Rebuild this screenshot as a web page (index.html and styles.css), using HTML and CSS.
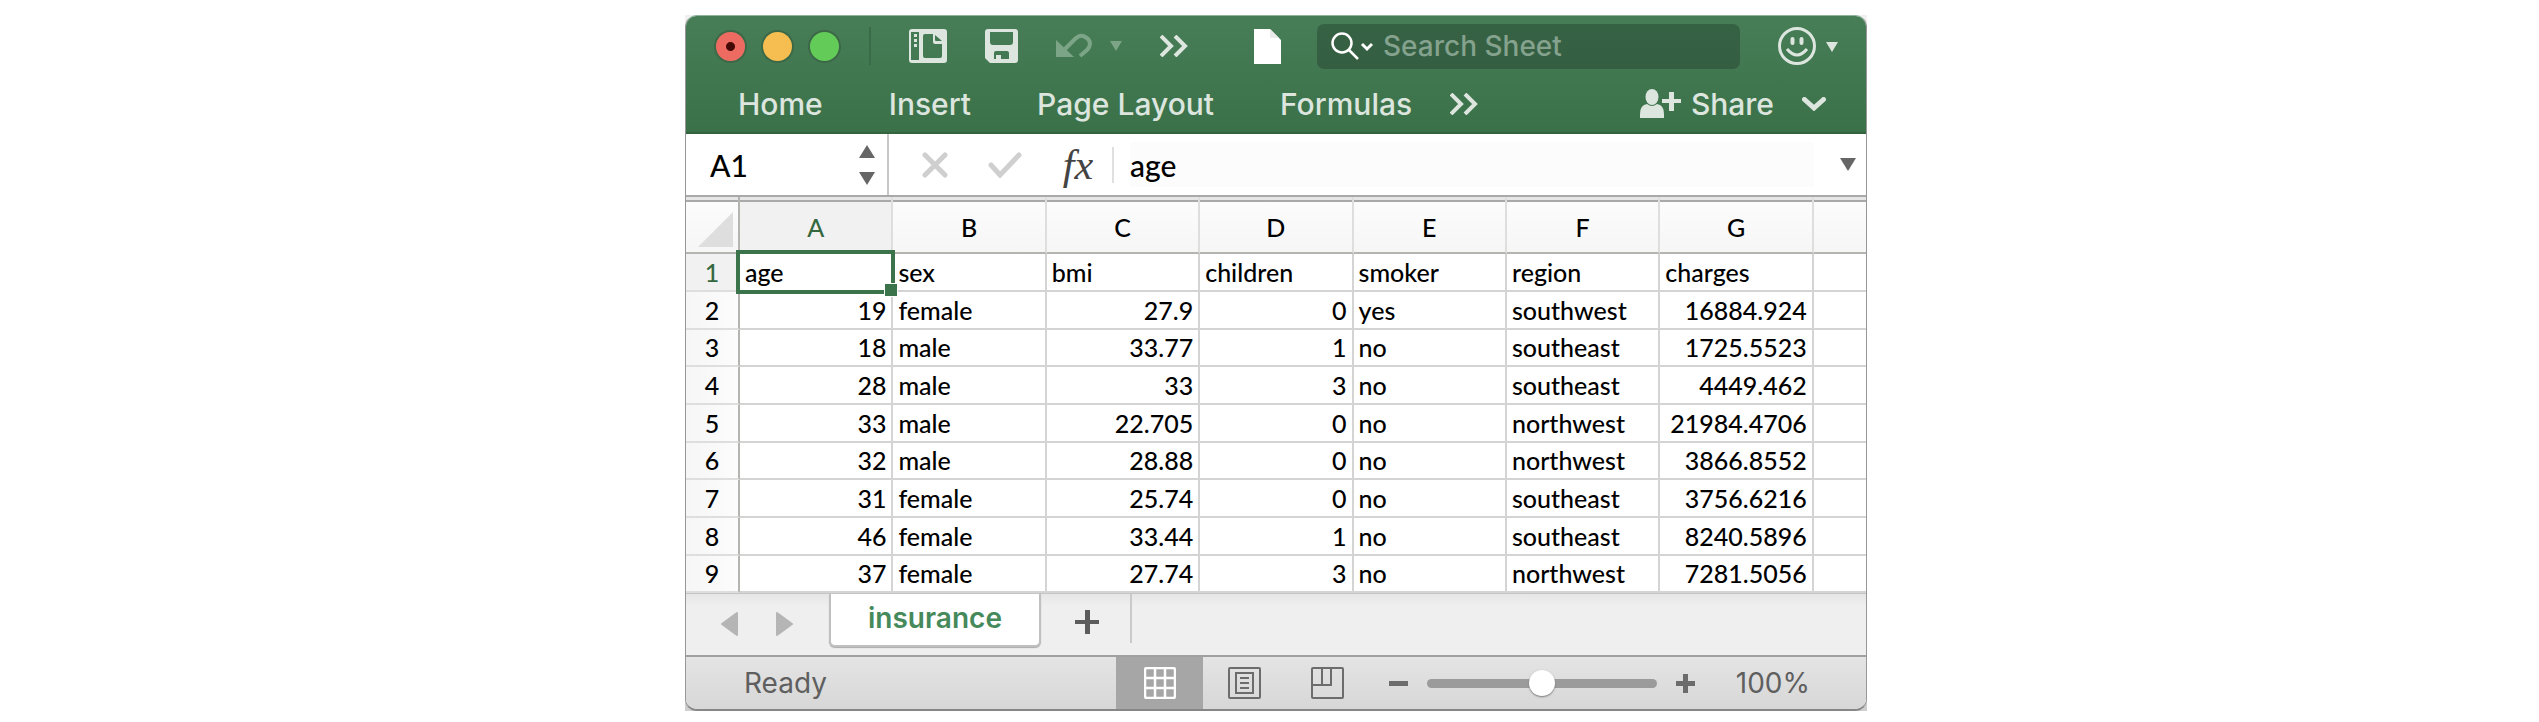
FILE: index.html
```html
<!DOCTYPE html>
<html lang="en">
<head>
<meta charset="utf-8">
<title>insurance</title>
<link rel="stylesheet" href="styles.css">
</head>
<body>
<main class="desktop">
<div class="frame">
<div class="window">
  <header class="ribbon">
    <div class="titlebar">
      <div class="lights">
        <button class="light light-close" aria-label="Close"></button>
        <button class="light light-min" aria-label="Minimize"></button>
        <button class="light light-max" aria-label="Zoom"></button>
      </div>
      <div class="quick">
        <button class="icon-btn" aria-label="Templates">
          <svg width="38" height="34" viewBox="0 0 38 34"><path fill="#dce5de" fill-rule="evenodd" d="M3 0H35Q38 0 38 3V31Q38 34 35 34H3Q0 34 0 31V3Q0 0 3 0ZM2 3V31H10V3ZM16 5Q14 5 14 7V27Q14 29 16 29H31Q33 29 33 27V15H26Q24 15 24 13V5Z"/><path fill="#dce5de" d="M5 5h3v3H5zM5 10h3v3H5zM5 15h3v3H5z"/><path fill="#41784f" d="M26 6l7 6h-6q-1 0-1-1z"/></svg>
        </button>
        <button class="icon-btn" aria-label="Save">
          <svg width="33" height="34" viewBox="0 0 33 34"><path fill="#dce5de" fill-rule="evenodd" d="M3 0H30Q33 0 33 3V31Q33 34 30 34H5L0 29V3Q0 0 3 0ZM5 3V13Q5 16 8 16H25Q28 16 28 13V3ZM11 22Q9 22 9 24V30H11V26H16V30H24V24Q24 22 22 22Z"/></svg>
        </button>
        <button class="icon-btn" aria-label="Undo">
          <svg width="36" height="26" viewBox="0 0 36 26"><path fill="#7ca487" d="M0 7V24H18Z"/><path fill="none" stroke="#7ca487" stroke-width="4" d="M9 16L19 6Q23 2 27 3Q33 5 34 10Q34 14 31 17L24 23"/></svg>
        </button>
        <button class="icon-btn" aria-label="Undo options">
          <svg width="12" height="10" viewBox="0 0 12 10"><path fill="#7ca487" d="M0 0H12L6 10Z"/></svg>
        </button>
        <button class="icon-btn" aria-label="More commands">
          <svg width="28" height="22" viewBox="0 0 28 22"><path fill="none" stroke="#dce5de" stroke-width="4" d="M1 1L11 11L1 21M15 1L25 11L15 21"/></svg>
        </button>
      </div>
      <svg class="doc" width="27" height="35" viewBox="0 0 27 35"><path fill="#fff" d="M0 0H16L27 11V35H0Z"/><path fill="#e9e9e9" d="M16 0V9H25Z"/></svg>
      <label class="search">
        <svg width="42" height="28" viewBox="0 0 42 28"><g fill="none" stroke="#fff" stroke-width="2.5"><circle cx="11" cy="11" r="9.5"/><path d="M18 18L27 27"/><path stroke-width="3" d="M31 12L36 17L41 12"/></g></svg>
        <input class="search-input" type="text" placeholder="Search Sheet" aria-label="Search Sheet">
      </label>
      <button class="icon-btn smile" aria-label="Feedback">
        <svg width="60" height="38" viewBox="0 0 60 38"><g fill="none" stroke="#dce5de"><circle cx="19" cy="19" r="17.5" stroke-width="3"/><path stroke-width="4" stroke-linecap="round" d="M14.500 12V16M23.500 12V16"/><path stroke-width="3" d="M9 22Q19 34 29 22"/></g><path fill="#dce5de" d="M48 15H60L54 25Z"/></svg>
      </button>
    </div>
    <nav class="tabs">
      <a class="tab" href="#home">Home</a>
      <a class="tab" href="#insert">Insert</a>
      <a class="tab" href="#layout">Page Layout</a>
      <a class="tab" href="#formulas">Formulas</a>
      <button class="icon-btn more-tabs" aria-label="More tabs">
        <svg width="28" height="22" viewBox="0 0 28 22"><path fill="none" stroke="#dce5de" stroke-width="4" d="M1 1L11 11L1 21M15 1L25 11L15 21"/></svg>
      </button>
      <button class="share">
        <svg width="41" height="30" viewBox="0 0 41 30"><g fill="#dce5de"><ellipse cx="12" cy="8" rx="6.500" ry="8"/><path d="M0 29V25Q0 16 7 15Q12 19 17 15Q24 16 24 25V29Z"/><path d="M29 3H34V10H41V14H34V22H29V14H22V10H29Z"/></g></svg>
        <span>Share</span>
      </button>
      <button class="icon-btn collapse" aria-label="Collapse ribbon">
        <svg width="24" height="14" viewBox="0 0 24 14"><path fill="none" stroke="#dce5de" stroke-width="5" stroke-linecap="round" d="M2.500 2.500L12 11L21.500 2.500"/></svg>
      </button>
    </nav>
  </header>

  <section class="formula-bar">
    <div class="name-box">
      <input class="name-input" type="text" value="A1" aria-label="Name box">
      <button class="icon-btn" aria-label="Names">
        <svg width="16" height="40" viewBox="0 0 16 40"><path fill="#666" d="M0 13L8 0L16 13ZM0 27H16L8 40Z"/></svg>
      </button>
    </div>
    <div class="formula-tools">
      <button class="icon-btn" aria-label="Cancel">
        <svg width="26" height="26" viewBox="0 0 26 26"><path fill="none" stroke="#cfcfcf" stroke-width="5" stroke-linecap="round" d="M3 3L23 23M23 3L3 23"/></svg>
      </button>
      <button class="icon-btn" aria-label="Enter">
        <svg width="34" height="26" viewBox="0 0 34 26"><path fill="none" stroke="#cfcfcf" stroke-width="5" stroke-linecap="round" d="M3 13L12 23L31 3"/></svg>
      </button>
      <button class="fx" aria-label="Insert function">fx</button>
    </div>
    <input class="formula-input" type="text" value="age" aria-label="Formula">
    <button class="icon-btn expand" aria-label="Expand formula bar">
      <svg width="16" height="13" viewBox="0 0 16 13"><path fill="#666" d="M0 0H16L8 13Z"/></svg>
    </button>
  </section>

  <table class="grid">
    <colgroup><col class="col-row"><col class="col"><col class="col"><col class="col"><col class="col"><col class="col"><col class="col"><col class="col"><col></colgroup>
    <thead>
      <tr><th class="corner"><svg width="35" height="35" viewBox="0 0 35 35"><path fill="#dedede" d="M35 0V35H0Z"/></svg></th><th class="active">A</th><th>B</th><th>C</th><th>D</th><th>E</th><th>F</th><th>G</th><th></th></tr>
    </thead>
    <tbody>
      <tr><th class="active">1</th><td class="selected">age</td><td>sex</td><td>bmi</td><td>children</td><td>smoker</td><td>region</td><td>charges</td><td></td></tr>
      <tr><th>2</th><td class="num">19</td><td>female</td><td class="num">27.9</td><td class="num">0</td><td>yes</td><td>southwest</td><td class="num">16884.924</td><td></td></tr>
      <tr><th>3</th><td class="num">18</td><td>male</td><td class="num">33.77</td><td class="num">1</td><td>no</td><td>southeast</td><td class="num">1725.5523</td><td></td></tr>
      <tr><th>4</th><td class="num">28</td><td>male</td><td class="num">33</td><td class="num">3</td><td>no</td><td>southeast</td><td class="num">4449.462</td><td></td></tr>
      <tr><th>5</th><td class="num">33</td><td>male</td><td class="num">22.705</td><td class="num">0</td><td>no</td><td>northwest</td><td class="num">21984.4706</td><td></td></tr>
      <tr><th>6</th><td class="num">32</td><td>male</td><td class="num">28.88</td><td class="num">0</td><td>no</td><td>northwest</td><td class="num">3866.8552</td><td></td></tr>
      <tr><th>7</th><td class="num">31</td><td>female</td><td class="num">25.74</td><td class="num">0</td><td>no</td><td>southeast</td><td class="num">3756.6216</td><td></td></tr>
      <tr><th>8</th><td class="num">46</td><td>female</td><td class="num">33.44</td><td class="num">1</td><td>no</td><td>southeast</td><td class="num">8240.5896</td><td></td></tr>
      <tr><th>9</th><td class="num">37</td><td>female</td><td class="num">27.74</td><td class="num">3</td><td>no</td><td>northwest</td><td class="num">7281.5056</td><td></td></tr>
    </tbody>
  </table>

  <section class="sheets">
    <div class="sheet-nav">
      <button class="icon-btn" aria-label="Previous sheet"><svg width="17" height="24" viewBox="0 0 17 24"><path fill="#b5b5b5" stroke="#b5b5b5" stroke-width="2" stroke-linejoin="round" d="M16 1V23L1 12Z"/></svg></button>
      <button class="icon-btn" aria-label="Next sheet"><svg width="17" height="24" viewBox="0 0 17 24"><path fill="#b5b5b5" stroke="#b5b5b5" stroke-width="2" stroke-linejoin="round" d="M1 1V23L16 12Z"/></svg></button>
    </div>
    <a class="sheet-tab" href="#insurance">insurance</a>
    <button class="add-sheet" aria-label="Add sheet"><svg width="24" height="24" viewBox="0 0 24 24"><path fill="#5c5c5c" d="M10 0H15V10H24V14H15V24H10V14H0V10H10Z"/></svg></button>
  </section>

  <footer class="status">
    <span class="ready">Ready</span>
    <button class="view view-on" aria-label="Normal view">
      <svg width="32" height="32" viewBox="0 0 32 32"><rect x="1" y="1" width="30" height="30" rx="2" fill="none" stroke="#fff" stroke-width="2.500"/><path stroke="#fff" stroke-width="2.500" d="M11 1V31M21 1V31M1 11H31M1 21H31"/></svg>
    </button>
    <button class="view" aria-label="Page layout view">
      <svg width="33" height="32" viewBox="0 0 33 32"><g fill="none" stroke="#6c6c6c" stroke-width="2"><rect x="1" y="1" width="31" height="30" rx="1"/><rect x="8" y="6" width="17" height="20"/><path d="M12 11H21M12 16H21M12 21H21"/></g></svg>
    </button>
    <button class="view" aria-label="Page break view">
      <svg width="33" height="32" viewBox="0 0 33 32"><g fill="none" stroke="#6c6c6c" stroke-width="2"><rect x="1" y="1" width="31" height="30" rx="1"/><path d="M1 18H20V1M11 1V18"/></g></svg>
    </button>
    <div class="zoom">
      <button class="icon-btn" aria-label="Zoom out"><svg width="19" height="19" viewBox="0 0 19 19"><path fill="#6c6c6c" d="M0 7H19V12H0Z"/></svg></button>
      <input class="slider" type="range" min="0" max="100" value="50" aria-label="Zoom level">
      <button class="icon-btn" aria-label="Zoom in"><svg width="19" height="19" viewBox="0 0 19 19"><path fill="#6c6c6c" d="M7 0H12V7H19V12H12V19H7V12H0V7H7Z"/></svg></button>
      <span class="percent">100%</span>
    </div>
  </footer>
</div>
</div>
</main>
</body>
</html>
```
FILE: styles.css
```css
* { box-sizing: border-box; }
body { margin: 0; background: #fff; font-family: Inter, "Liberation Sans", sans-serif; }
button { border: 0; padding: 0; margin: 0; background: none; font: inherit; color: inherit; }
input { border: 0; padding: 0; margin: 0; background: none; font: inherit; color: inherit; min-width: 0; }
a { color: inherit; text-decoration: none; }
svg { display: block; flex: none; }

.desktop { display: grid; grid-template-columns: 685fr minmax(0, 1182fr) 672fr; padding: 15px 0 12px; }
.frame { grid-column: 2; background: linear-gradient(#f0f0f0 50%, #cfcfcf 50%); }
.window {
  border: 1px solid #979797;
  border-top-color: #8fb39b;
  border-bottom: 2px solid #868686;
  border-radius: 12px;
  overflow: hidden;
  background: #fff;
}

.ribbon {
  padding-top: 6px;
  background: linear-gradient(#477e57, #3b7149);
  border-bottom: 2px solid #33633f;
  color: #dce5de;
}
.titlebar { display: flex; align-items: center; height: 48px; padding: 0 28px 0 30px; }
.icon-btn { flex: none; }
.lights { display: flex; gap: 18px; padding-right: 30px; border-right: 2px solid #3a6b48; height: 38px; align-items: center; }
.light { width: 29px; height: 29px; border-radius: 50%; box-shadow: 0 0 0 2px #3c6847; }
.light-close { background: radial-gradient(circle, #450a06 4px, #ed6b60 5px); }
.light-min { background: #f6be50; }
.light-max { background: #63cb57; }
.quick { display: flex; align-items: center; gap: 38px; margin-left: 38px; }
.quick .icon-btn:nth-child(4) { margin-left: -20px; }
.doc { margin-left: 66px; }
.search {
  display: flex; align-items: center; gap: 10px; flex: 1; min-width: 0; height: 45px;
  margin-left: 36px; padding: 0 14px; border-radius: 7px;
  background: linear-gradient(#366244, #355e41);
}
.search-input { flex: 1; width: 100%; font-size: 28px; font-weight: 500; }
.search-input::placeholder { color: #84a28d; opacity: 1; }
.smile { margin-left: 38px; }

.tabs { display: flex; align-items: center; height: 62px; padding: 12px 40px 6px 52px; font-size: 30px; font-weight: 500; }
.tab { margin-right: 66px; white-space: nowrap; }
.more-tabs { margin-left: -28px; }
.share { display: flex; align-items: center; gap: 10px; margin-left: auto; }
.collapse { margin-left: 28px; }

.formula-bar { display: flex; align-items: center; height: 61px; font-family: Lato, "Open Sans", sans-serif; font-size: 30px; font-weight: 500; }
.name-box { display: flex; align-items: center; width: 203px; height: 61px; padding: 0 12px 0 24px; border-right: 2px solid #c8c8c8; }
.name-input { flex: 1; width: 100px; }
.formula-tools { display: flex; align-items: center; gap: 40px; height: 36px; padding: 0 18px 0 33px; border-right: 2px solid #e0e0e0; }
.fx { width: 32px; font-family: "Liberation Serif", serif; font-style: italic; font-weight: 400; font-size: 42px; line-height: 36px; color: #444; }
.formula-input { flex: 1; height: 45px; margin-left: 16px; background: #fcfcfc; }
.expand { margin: 0 10px 0 26px; }

.grid {
  width: 100%; table-layout: fixed; border-collapse: separate; border-spacing: 0;
  border-top: 2px solid #a9a9a9;
  font-family: Lato, "Open Sans", sans-serif; font-size: 25px; font-weight: 500; line-height: 30px; color: #000;
}
.col-row { width: 54px; }
.col { width: 13%; }
.grid th, .grid td { padding: 0 5px 1px; font-weight: 500; border-right: 2px solid #d4d4d4; border-bottom: 2px solid #d4d4d4; height: 38px; white-space: nowrap; text-align: left; }
.grid tr > :last-child { border-right: 0; }
.grid tbody tr:nth-child(3n) > * { height: 37px; }
.grid thead th {
  height: 57px; padding-top: 6px; text-align: center; border-bottom-color: #b5b4b1;
  background: linear-gradient(#e6e6e6 3px, #a9a9a9 3px, #a9a9a9 5px, #fcfcfc 5px, #f6f6f6);
  border-right-color: #dedede;
}
.grid thead th.active { background: linear-gradient(#e6e6e6 3px, #a9a9a9 3px, #a9a9a9 5px, #f1f1f1 5px); color: #35683f; }
.grid thead th.corner { padding: 10px 0 0 12px; border-right-color: #b5b4b1; }
.grid tbody th { padding: 0 0 1px; text-align: center; background: linear-gradient(90deg, #f6f6f6, #fcfcfc); border-right-color: #b5b4b1; border-bottom-color: #dedede; }
.grid tbody th.active { background: #f1f1f1; color: #35683f; }
.grid td.num { text-align: right; }
.grid td.selected { position: relative; }
.selected::before { content: ""; position: absolute; inset: -4px; border: 4px solid #3b734a; }
.selected::after { content: ""; position: absolute; right: -7px; bottom: -7px; width: 12px; height: 12px; background: #3b734a; border: 1px solid #fff; box-sizing: content-box; }

.sheets { display: flex; align-items: flex-start; height: 64px; background: linear-gradient(#e6e6e6, #efefef 12px); border-top: 1px solid #c4c4c4; border-bottom: 2px solid #a0a0a0; }
.sheet-nav { display: flex; gap: 38px; padding: 18px 36px 0 35px; }
.sheet-tab { width: 212px; height: 53px; line-height: 48px; text-align: center; background: #fff; border: 2px solid #c0c0c0; border-top: 0; border-radius: 0 0 6px 6px; box-shadow: 0 1px 1px #aaa; color: #468a5c; font-size: 28px; font-weight: 600; }
.add-sheet { height: 49px; padding: 6px 31px 0 34px; border-right: 2px solid #cacaca; }

.status { display: flex; align-items: center; height: 52px; background: linear-gradient(#e4e4e4, #d7d7d7); color: #5f5f5f; font-size: 28px; }
.ready { width: 430px; padding-left: 58px; }
.view { display: flex; align-items: center; justify-content: center; width: 83px; height: 52px; }
.view-on { width: 87px; background: #a6a6a6; }
.zoom { display: flex; align-items: center; gap: 19px; flex: 1; margin-left: 20px; padding-right: 56px; }
.slider { flex: 1; height: 28px; -webkit-appearance: none; appearance: none; }
.slider::-webkit-slider-runnable-track { height: 9px; border-radius: 5px; background: #9b9b9b; }
.slider::-webkit-slider-thumb { -webkit-appearance: none; width: 26px; height: 26px; margin-top: -9px; border-radius: 50%; background: #fff; box-shadow: 0 1px 2px #777; }
.percent { margin-left: 22px; }
```
